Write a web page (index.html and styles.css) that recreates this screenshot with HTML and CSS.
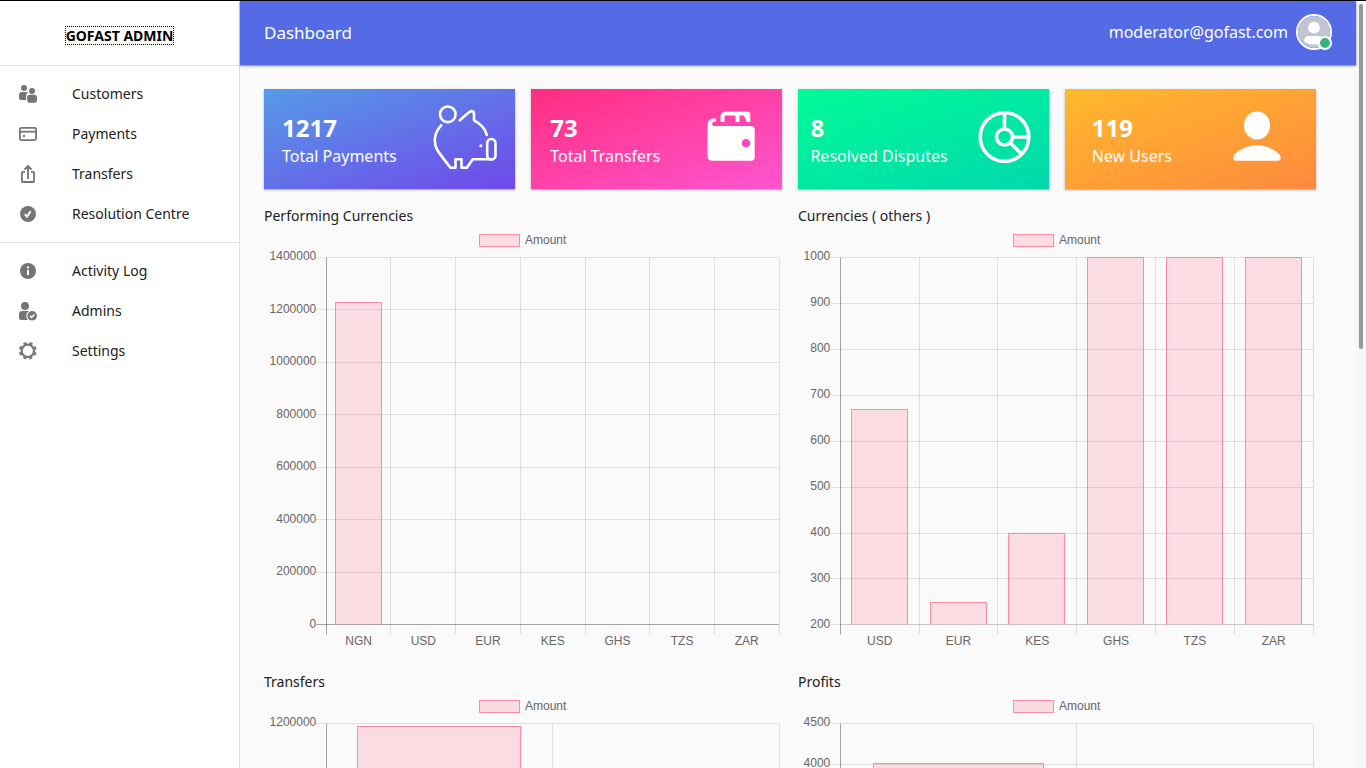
FILE: index.html
```html
<!DOCTYPE html>
<html lang="en">
<head>
<meta charset="utf-8">
<meta name="viewport" content="width=device-width, initial-scale=1">
<title>Dashboard - GoFast Admin</title>
<link rel="stylesheet" href="styles.css">
</head>
<body>
<div class="app">
  <aside class="sidebar">
    <div class="brand"><a class="brand-link" href="#">GOFAST ADMIN</a></div>
    <nav class="nav">
      <ul class="nav-group">
        <li><a class="nav-link" href="#">
          <svg class="nav-icon" viewBox="0 0 20 20"><circle cx="6" cy="4" r="3"/><path d="M4 8h6q-2 1.500-1.800 4v4H3q-2 0-2-2v-3q0-3 3-3z"/><circle cx="14" cy="7" r="3"/><rect x="9.200" y="10.700" width="9.800" height="8" rx="2.800"/></svg>
          Customers</a></li>
        <li><a class="nav-link" href="#">
          <svg class="nav-icon" viewBox="0 0 20 20"><rect class="line" x="1.900" y="3.900" width="16.200" height="12.200" rx="1.500"/><path class="line" d="M2 7.700h16"/><rect x="5" y="11" width="2" height="2"/></svg>
          Payments</a></li>
        <li><a class="nav-link" href="#">
          <svg class="nav-icon" viewBox="0 0 20 20"><path class="line" d="M7 7.900H5q-1.100 0-1.100 1.100v7.900Q3.900 18 5 18h10q1.100 0 1.100-1.100V9q0-1.100-1.100-1.100h-2M10 15V2.200M6.500 5.500 10 2l3.500 3.500"/></svg>
          Transfers</a></li>
        <li><a class="nav-link" href="#">
          <svg class="nav-icon" viewBox="0 0 20 20"><circle cx="10" cy="10" r="8"/><path class="mark" d="m6.800 10.300 2.200 2.400 3.600-5.500"/></svg>
          Resolution Centre</a></li>
      </ul>
      <ul class="nav-group">
        <li><a class="nav-link" href="#">
          <svg class="nav-icon" viewBox="0 0 20 20"><circle cx="10" cy="10" r="8"/><path class="mark" d="M10 5.500v2M10 9v5"/></svg>
          Activity Log</a></li>
        <li><a class="nav-link" href="#">
          <svg class="nav-icon" viewBox="0 0 20 20"><circle cx="7" cy="5" r="4"/><path d="M4 10h7q-3 2-2.600 5.500Q8.600 17.500 10 19H3q-2 0-2-2v-4q0-3 3-3z"/><circle cx="14.200" cy="14.800" r="4.800"/><path class="tick" d="m12 14.800 1.600 1.600 2.900-3"/></svg>
          Admins</a></li>
        <li><a class="nav-link" href="#">
          <svg class="nav-icon" viewBox="0 0 20 20"><circle class="ring" cx="9.800" cy="9.800" r="6.200"/><circle class="teeth" cx="9.800" cy="9.800" r="7.900"/></svg>
          Settings</a></li>
      </ul>
    </nav>
  </aside>

  <div class="page">
    <header class="topbar">
      <h1 class="topbar-title">Dashboard</h1>
      <div class="account">
        <span>moderator@gofast.com</span>
        <span class="avatar">
          <svg class="avatar-image" viewBox="0 0 32 32"><circle cx="16" cy="16" r="16" fill="#bfc5d2"/><circle cx="16" cy="11.700" r="5.900" fill="#fff"/><path d="M10 20h12q4 1 4 5-3 3.500-10 3.500T6 25q0-4 4-5z" fill="#fff"/></svg>
          <span class="status"></span>
        </span>
      </div>
    </header>

    <main class="content">
      <section class="stats">
        <article class="card card-payments">
          <div class="card-text"><p class="card-value">1217</p><p class="card-label">Total Payments</p></div>
          <svg class="card-icon" viewBox="0 0 64 64" fill="none" stroke="#fff" stroke-width="2.600" stroke-linecap="round" stroke-linejoin="round"><circle cx="14.800" cy="9.300" r="7.800"/><path d="M8.200 20.300Q1.800 27 1.800 35q0 5.500 2.500 10 2 3.500 13.200 17.700h5v-8.400h6v8.400h5.300l6-8.400h17.700M26.800 15.300l8-7q5-4.300 6.200 0v7Q51.500 20.500 53.800 30"/><rect x="54.200" y="34" width="8.300" height="20.500" rx="4"/><circle cx="47.800" cy="40.700" r="1.500" fill="#fff" stroke="none"/></svg>
        </article>
        <article class="card card-transfers">
          <div class="card-text"><p class="card-value">73</p><p class="card-label">Total Transfers</p></div>
          <svg class="card-icon" viewBox="0 0 64 64" fill="none" stroke="#fff" stroke-width="4"><path fill="#fff" fill-rule="evenodd" stroke="none" d="M8.500 20q0-5 4.500-6.500h4v3h-2q-2 .5-2 3l1.500 1.500H52q3.700 0 3.700 3.700V52q0 3.700-3.700 3.700H13.500q-5 0-5-5zM47 34a4.300 4.300 0 1 0 0 8.600 4.300 4.300 0 0 0 0-8.600z"/><path d="M23.500 17v-5q0-3.500 3.500-3.500h21q1.300 0 1.300 1.300V17M38.500 9v8M46 9l3 5"/></svg>
        </article>
        <article class="card card-disputes">
          <div class="card-text"><p class="card-value">8</p><p class="card-label">Resolved Disputes</p></div>
          <svg class="card-icon" viewBox="0 0 64 64" fill="none" stroke="#fff" stroke-width="3.600"><circle cx="31.500" cy="32" r="24.300"/><circle cx="31.500" cy="32" r="8"/><path d="M31.500 24V8M39.500 32H56M37.200 37.700l11.600 11.600"/></svg>
        </article>
        <article class="card card-users">
          <div class="card-text"><p class="card-value">119</p><p class="card-label">New Users</p></div>
          <svg class="card-icon" viewBox="0 0 64 64" fill="#fff"><ellipse cx="32" cy="20.500" rx="13" ry="14"/><path d="M11 55.700q-2.700 0-2.700-3Q8.300 50 11 48q9-7.700 21-7.700T53 48q2.700 2 2.700 4.700 0 3-2.700 3z"/></svg>
        </article>
      </section>

      <section class="charts">
        <figure class="chart"><figcaption class="chart-title">Performing Currencies</figcaption><svg class="plot" id="performing"></svg></figure>
        <figure class="chart"><figcaption class="chart-title">Currencies ( others )</figcaption><svg class="plot" id="others"></svg></figure>
        <figure class="chart"><figcaption class="chart-title">Transfers</figcaption><svg class="plot" id="transfers"></svg></figure>
        <figure class="chart"><figcaption class="chart-title">Profits</figcaption><svg class="plot" id="profits"></svg></figure>
      </section>
    </main>
  </div>
  <div class="scroll-track"><div class="scroll-thumb"></div></div>
</div>
<script src="charts.js"></script>
</body>
</html>
```

FILE: styles.css
```css
*, *::before, *::after { box-sizing: border-box; }

body {
  margin: 0;
  font-family: "Noto Sans", "Open Sans", sans-serif;
  font-size: 14px;
  color: #212121;
  background: #fafafa;
}

p, h1, ul, figure { margin: 0; padding: 0; }
ul { list-style: none; }
a { color: inherit; text-decoration: none; }

.app {
  display: grid;
  grid-template-columns: 240px minmax(0, 1fr) 10px;
  height: 100vh;
  border-top: 1px solid #000;
}

.sidebar { background: #fff; border-right: 1px solid #e0e0e0; }

.brand {
  display: flex;
  align-items: center;
  justify-content: center;
  height: 65px;
  padding-top: 4px;
  border-bottom: 1px solid #e0e0e0;
}
.brand-link {
  border: 1px dotted #000;
  color: #000;
  font-weight: 700;
  line-height: 17px;
}

.nav-group { padding: 8px 0; }
.nav-group + .nav-group { border-top: 1px solid #e0e0e0; }
.nav-link {
  display: flex;
  align-items: center;
  gap: 34px;
  height: 40px;
  padding: 0 18px 2px;
}
.nav-icon { width: 20px; height: 20px; margin-top: 2px; fill: #757575; }
.nav-icon .line { fill: none; stroke: #757575; stroke-width: 1.8; }
.nav-icon .mark { fill: none; stroke: #fff; stroke-width: 2; }
.nav-icon .tick { fill: none; stroke: #fff; stroke-width: 1.5; }
.nav-icon .ring { fill: none; stroke: #757575; stroke-width: 2.2; }
.nav-icon .teeth { fill: none; stroke: #757575; stroke-width: 2; stroke-dasharray: 3.2 3.005; stroke-dashoffset: -1.5; }

.page {
  display: flex;
  flex-direction: column;
  min-width: 0;
  min-height: 0;
}

.topbar {
  display: flex;
  flex: none;
  align-items: center;
  justify-content: space-between;
  z-index: 1;
  height: 64px;
  padding: 0 24px;
  color: #fff;
  background: #556ae5;
  box-shadow: 0 1px 3px rgba(0, 0, 0, .3), 0 1px 1px rgba(0, 0, 0, .2);
}
.topbar-title { font-size: 17px; font-weight: 400; line-height: 24px; }
.account {
  display: flex;
  align-items: center;
  gap: 8px;
  margin-bottom: 2px;
  font-size: 16px;
}
.avatar { position: relative; width: 36px; height: 36px; }
.avatar-image {
  display: block;
  width: 36px;
  height: 36px;
  border: 2px solid #fff;
  border-radius: 50%;
}
.status {
  position: absolute;
  right: 0;
  bottom: 0;
  width: 14px;
  height: 14px;
  border: 2px solid #fff;
  border-radius: 50%;
  background: #36b37e;
}

.content {
  flex: 1;
  min-height: 0;
  padding: 24px 40px 24px 24px;
  overflow-y: auto;
  scrollbar-width: none;
}

.stats {
  display: grid;
  grid-template-columns: repeat(4, minmax(0, 1fr));
  gap: 16px;
}
.card {
  display: flex;
  align-items: center;
  justify-content: space-around;
  height: 100px;
  color: #fff;
  box-shadow: 0 1px 3px rgba(0, 0, 0, .2), 0 1px 1px rgba(0, 0, 0, .14);
}
.card-payments { background: linear-gradient(160deg, #559be7, #7048ea); }
.card-transfers { background: linear-gradient(160deg, #ff2e80, #ff55d0); }
.card-disputes { background: linear-gradient(160deg, #00fb97, #00d8ad); }
.card-users { background: linear-gradient(160deg, #ffb92c, #ff8a3e); }
.card-text { margin-top: 2px; }
.card-value { font-size: 24px; font-weight: 700; line-height: 32px; }
.card-label { font-size: 16px; line-height: 24px; }
.card-icon { flex: none; width: 64px; height: 64px; margin-bottom: 4px; }

.charts {
  display: grid;
  grid-template-columns: repeat(2, minmax(0, 1fr));
  gap: 16px;
  margin-top: 16px;
}
.chart-title { line-height: 22px; }
.plot { display: block; width: 100%; height: 428px; }
.plot text { font: 12px "Liberation Sans", Arial, sans-serif; fill: #666; }
.grid-line { stroke: rgba(0, 0, 0, .1); }
.zero-line { stroke: rgba(0, 0, 0, .35); }
.bar-fill { fill: rgba(255, 99, 132, .2); }
.bar-line { fill: none; stroke: rgba(255, 99, 132, .7); }

.scroll-track { padding: 3px; background: #f7f7f7; }
.scroll-thumb { height: 45.3%; width: 4px; border-radius: 2px; background: #979797; }
```

FILE: charts.js
```js
const TOP = 30.5;
const BOTTOM = 397.9;

const charts = [
  { id: "performing", axis: 62.3, min: 0, max: 1400000, step: 200000,
    labels: ["NGN", "USD", "EUR", "KES", "GHS", "TZS", "ZAR"], values: [1228000, 0, 0, 0, 0, 0, 0] },
  { id: "others", axis: 42.3, min: 200, max: 1000, step: 100,
    labels: ["USD", "EUR", "KES", "GHS", "TZS", "ZAR"], values: [670, 249, 399, 1000, 1000, 1000] },
  { id: "transfers", axis: 62.3, min: 0, max: 1200000, step: 200000,
    labels: ["NGN", "USD"], values: [1190000, 0] },
  { id: "profits", axis: 42.3, min: 0, max: 4500, step: 500,
    labels: ["NGN", "USD"], values: [4010, 0] }
];

const snap = (n) => Math.floor(n) + 0.5;
const line = (x1, y1, x2, y2, cls) =>
  `<line class="${cls}" x1="${x1}" y1="${y1}" x2="${x2}" y2="${y2}"/>`;

function bar(x, y, w, h) {
  return `<rect class="bar-fill" x="${x}" y="${y}" width="${w}" height="${h}"/>` +
    `<path class="bar-line" d="M${x} ${y + h}V${y}H${x + w}V${y + h}"/>`;
}

function draw(c) {
  const svg = document.getElementById(c.id);
  const width = svg.clientWidth;
  const right = width - 2.9;
  const floor = snap(BOTTOM);
  const slot = (right - c.axis) / c.labels.length;
  const scale = (v) => BOTTOM - (v - c.min) / (c.max - c.min) * (BOTTOM - TOP);
  const mid = Math.round(width / 2);
  let out = `<rect class="bar-fill" x="${mid - 43.5}" y="7.5" width="40" height="12"/>` +
    `<rect class="bar-line" x="${mid - 43.5}" y="7.5" width="40" height="12"/>` +
    `<text x="${mid + 2}" y="17">Amount</text>`;

  for (let v = c.min; v <= c.max; v += c.step) {
    const y = snap(scale(v));
    out += line(c.axis - 10, y, right, y, v === 0 ? "zero-line" : "grid-line");
    out += `<text x="${c.axis - 10}" y="${Math.round(scale(v) + 2.9)}" text-anchor="end">${v}</text>`;
  }
  if (c.min !== 0) out += line(c.axis, floor, right, floor, "grid-line");

  for (let i = 0; i <= c.labels.length; i++) {
    const x = snap(c.axis + slot * i);
    out += line(x, TOP, x, floor + 10, i === 0 ? "zero-line" : "grid-line");
  }
  c.labels.forEach((label, i) => {
    const center = c.axis + slot * (i + 0.5);
    out += `<text x="${center}" y="418" text-anchor="middle">${label}</text>`;
    if (c.values[i] > c.min) {
      const y = snap(scale(c.values[i]));
      out += bar(snap(center - slot * 0.36), y, Math.floor(slot * 0.72), floor - y);
    }
  });
  svg.innerHTML = out;
}

const drawAll = () => charts.forEach(draw);
drawAll();
window.addEventListener("resize", drawAll);
```
